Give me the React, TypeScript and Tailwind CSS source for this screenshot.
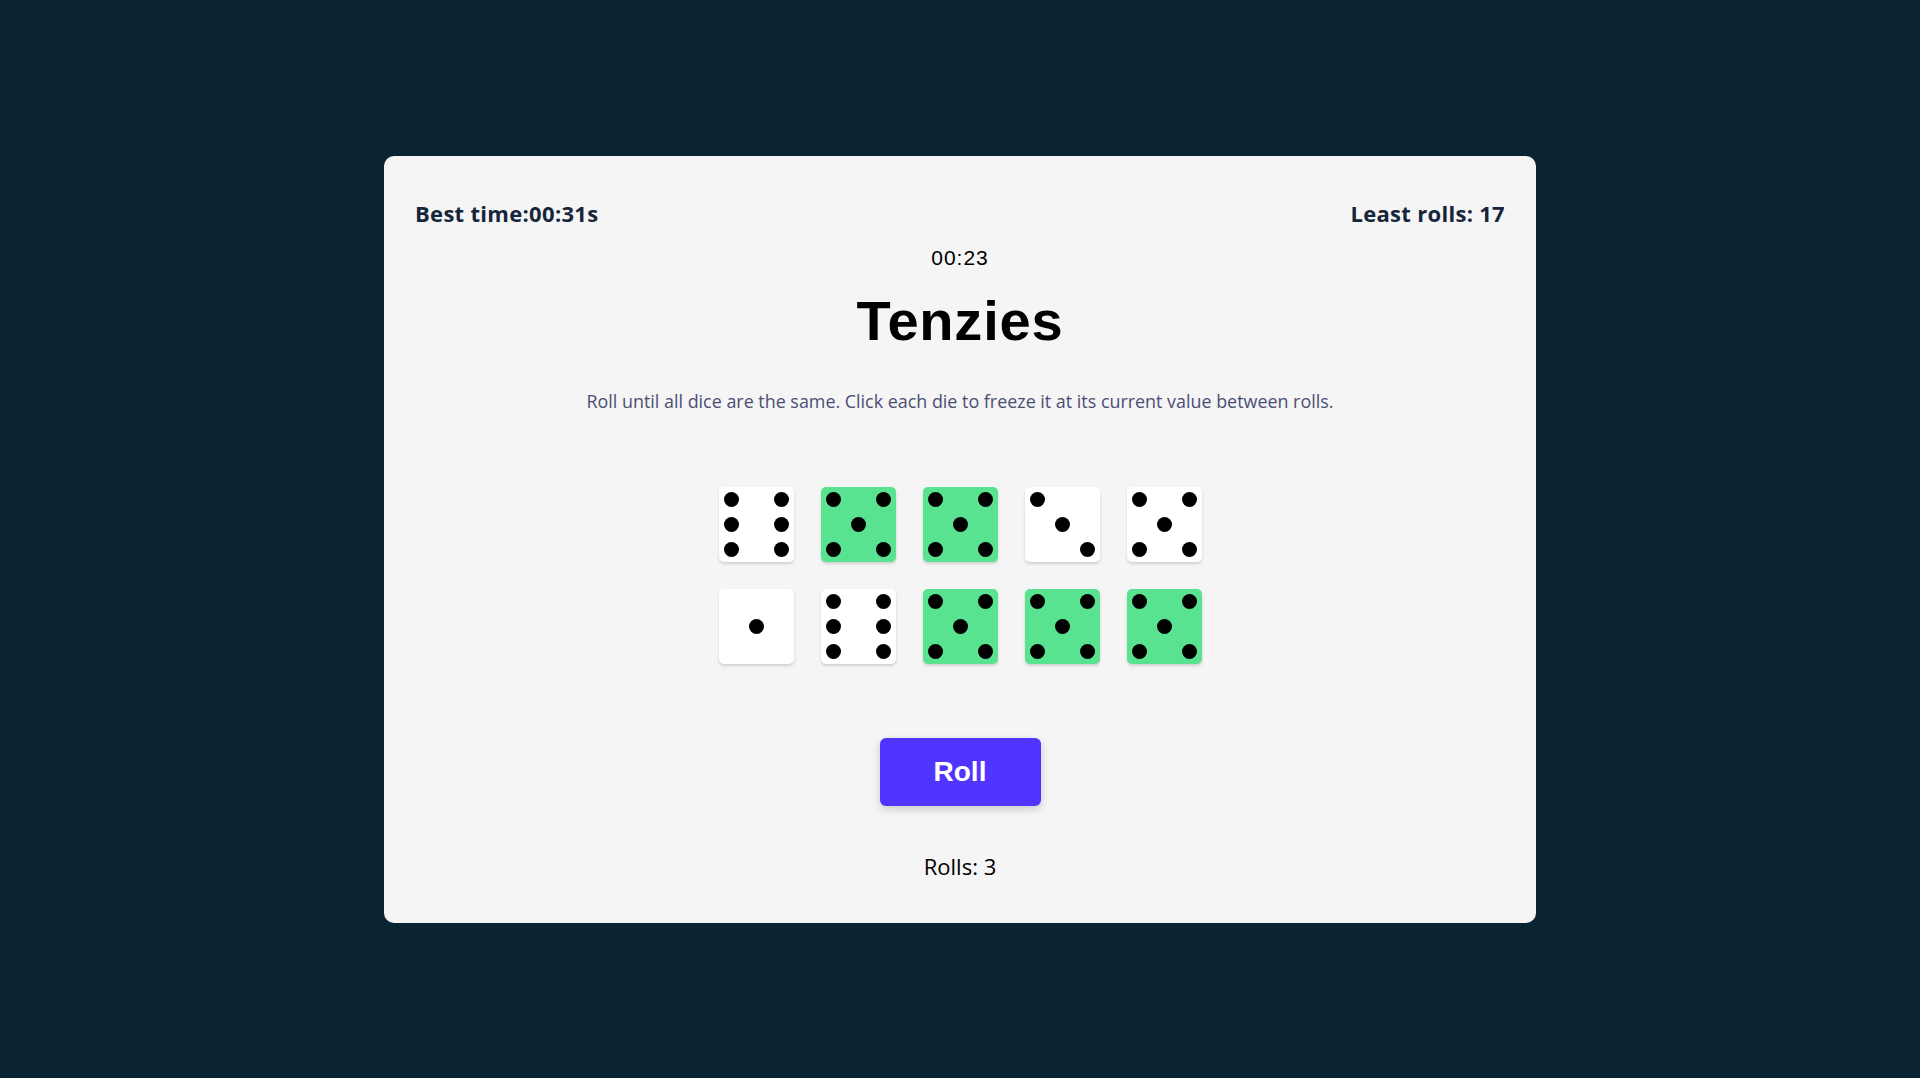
import React from 'react';

type Die = { value: number; held: boolean };

const dice: Die[] = [
  { value: 6, held: false },
  { value: 5, held: true },
  { value: 5, held: true },
  { value: 3, held: false },
  { value: 5, held: false },
  { value: 1, held: false },
  { value: 6, held: false },
  { value: 5, held: true },
  { value: 5, held: true },
  { value: 5, held: true },
];

// which cells of the 3x3 face get a pip
const pips: Record<number, number[]> = {
  1: [4],
  2: [0, 8],
  3: [0, 4, 8],
  4: [0, 2, 6, 8],
  5: [0, 2, 4, 6, 8],
  6: [0, 2, 3, 5, 6, 8],
};

const DieFace: React.FC<{ die: Die }> = ({ die }) => (
  <div
    className={`w-[75px] h-[75px] rounded-[5px] grid grid-cols-3 grid-rows-3 shadow-[0_2px_3px_rgba(0,0,0,0.15)] cursor-pointer ${
      die.held ? 'bg-[#59E391]' : 'bg-white'
    }`}
  >
    {Array.from({ length: 9 }).map((_, i) => (
      <div key={i} className="flex items-center justify-center">
        {pips[die.value].includes(i) && <span className="block w-[15px] h-[15px] rounded-full bg-black" />}
      </div>
    ))}
  </div>
);

const App: React.FC = () => {
  return (
    <div className="min-h-screen bg-[#0B2434] flex items-center justify-center">
      <main className="w-[1152px] h-[767px] bg-[#F5F5F5] rounded-[10px] flex flex-col items-center px-[31px] pt-[44px]">
        <div className="w-full flex justify-between font-['Open_Sans',sans-serif] font-bold text-[22px] leading-[26px] tracking-[0.3px] text-[#15263a]">
          <span>Best time:00:31s</span>
          <span>Least rolls: 17</span>
        </div>

        <p className="mt-[20px] font-['Liberation_Sans',Arial,sans-serif] text-[21px] leading-[24px] tracking-[1px] text-black">
          00:23
        </p>

        <h1 className="mt-[19px] font-['Liberation_Sans',Arial,sans-serif] font-bold text-[56px] leading-[64px] tracking-[0.8px] text-black">
          Tenzies
        </h1>

        <p className="mt-[38px] font-['Open_Sans',sans-serif] text-[17.9px] leading-[20px] text-[#4A4E74]">
          Roll until all dice are the same. Click each die to freeze it at its current value between rolls.
        </p>

        <div className="mt-[76px] grid grid-cols-5 gap-[27px]">
          {dice.map((d, i) => (
            <DieFace key={i} die={d} />
          ))}
        </div>

        <button className="mt-[74px] w-[161px] h-[68px] rounded-[6px] bg-[#5035FF] text-white font-['Liberation_Sans',Arial,sans-serif] font-bold text-[28px] shadow-[0_3px_8px_rgba(0,0,0,0.18)]">
          Roll
        </button>

        <p className="mt-[47px] font-['Open_Sans',sans-serif] text-[22px] leading-[26px] text-black">Rolls: 3</p>
      </main>
    </div>
  );
};

export default App;
